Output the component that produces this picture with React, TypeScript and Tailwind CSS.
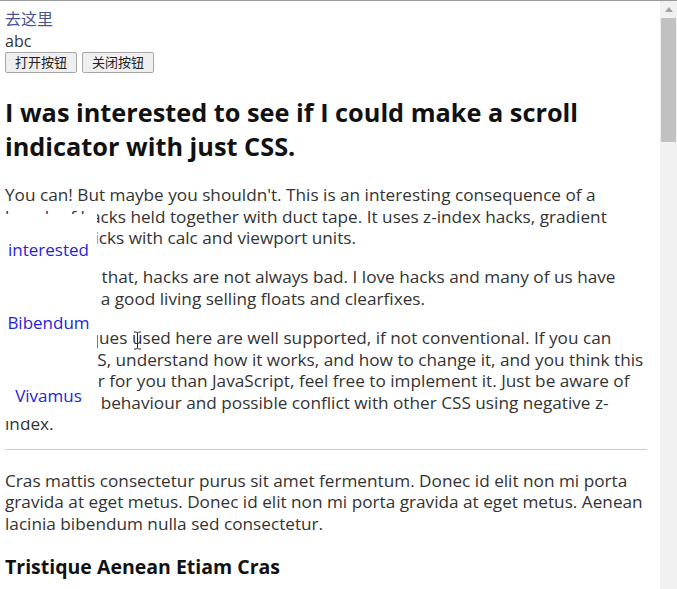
import React from "react";

const body = "font-['Open_Sans','Noto_Sans','Noto_Sans_CJK_SC',sans-serif]";

function Scrollbar() {
  return (
    <div className="flex w-[17px] shrink-0 flex-col items-center bg-[#f1f1f1]">
      <div className="flex h-[17px] w-full items-center justify-center">
        <svg width="8" height="5" viewBox="0 0 8 5">
          <path d="M0 5 L4 0 L8 5 Z" fill="#a3a3a3" />
        </svg>
      </div>
      <div className="h-[124px] w-[15px] bg-[#c1c1c1]" />
    </div>
  );
}

function SideNav() {
  const links = ["interested", "Bibendum", "Vivamus"];
  return (
    <div className="absolute left-0 top-[213px] flex h-[206px] w-[97px] flex-col items-center gap-[51px] bg-white pt-[25px]">
      {links.map((l) => (
        <a key={l} className="text-[17px] leading-[22px] text-[#2424d8]">
          {l}
        </a>
      ))}
    </div>
  );
}

function Cursor() {
  return (
    <svg className="absolute left-[133px] top-[330px]" width="9" height="19" viewBox="0 0 9 19">
      <path d="M1 1 H3.5 L4.5 2 L5.5 1 H8 M4.5 2 V17 M1 18 H3.5 L4.5 17 L5.5 18 H8" stroke="#222" strokeWidth="1" fill="none" />
    </svg>
  );
}

export default function App() {
  return (
    <div className={`flex h-[589px] w-[677px] flex-col overflow-hidden border-t border-[#9a9a9a] bg-white ${body}`}>
      <div className="flex min-h-0 flex-1">
        <main className="relative flex-1 overflow-hidden pl-[5px] pr-[9px] pt-[7px] text-[17.2px] leading-[21.5px] text-[#333]">
          <a className="block text-[16px] leading-[22px] text-[#4a5590]">去这里</a>
          <div className="text-[16px] leading-[22px]">abc</div>
          <div className="flex gap-[5px]">
            <button className="h-[21px] w-[72px] rounded-[2px] border border-[#a6a6a6] bg-[#efefef] text-[13px] leading-[19px] text-[#222]">
              打开按钮
            </button>
            <button className="h-[21px] w-[72px] rounded-[2px] border border-[#a6a6a6] bg-[#efefef] text-[13px] leading-[19px] text-[#222]">
              关闭按钮
            </button>
          </div>

          <h1 className="mt-[22px] text-[25.3px] font-bold leading-[34px] text-[#111]">
            I was interested to see if I could make a scroll
            <br />
            indicator with just CSS.
          </h1>

          <p className="mt-[21px]">
            You can! But maybe you shouldn't. This is an interesting consequence of a
            <br />
            bunch of hacks held together with duct tape. It uses z-index hacks, gradient
            <br />
            hacks, or tricks with calc and viewport units.
          </p>
          <p className="mt-[17.5px]">
            Having said that, hacks are not always bad. I love hacks and many of us have
            <br />
            made quite a good living selling floats and clearfixes.
          </p>
          <p className="mt-[18px]">
            The techniques used here are well supported, if not conventional. If you can
            <br />
            read the CSS, understand how it works, and how to change it, and you think this
            <br />
            is just better for you than JavaScript, feel free to implement it. Just be aware of
            <br />
            the strange behaviour and possible conflict with other CSS using negative z-
            <br />
            index.
          </p>

          <hr className="mr-[4px] mt-[14.5px] border-t border-[#c8cad4]" />

          <p className="mt-[19.5px]">
            Cras mattis consectetur purus sit amet fermentum. Donec id elit non mi porta
            <br />
            gravida at eget metus. Donec id elit non mi porta gravida at eget metus. Aenean
            <br />
            lacinia bibendum nulla sed consectetur.
          </p>

          <h3 className="mt-[20px] text-[19.5px] font-bold leading-[26px] text-[#111]">Tristique Aenean Etiam Cras</h3>

          <SideNav />
          <Cursor />
        </main>
        <Scrollbar />
      </div>
    </div>
  );
}
